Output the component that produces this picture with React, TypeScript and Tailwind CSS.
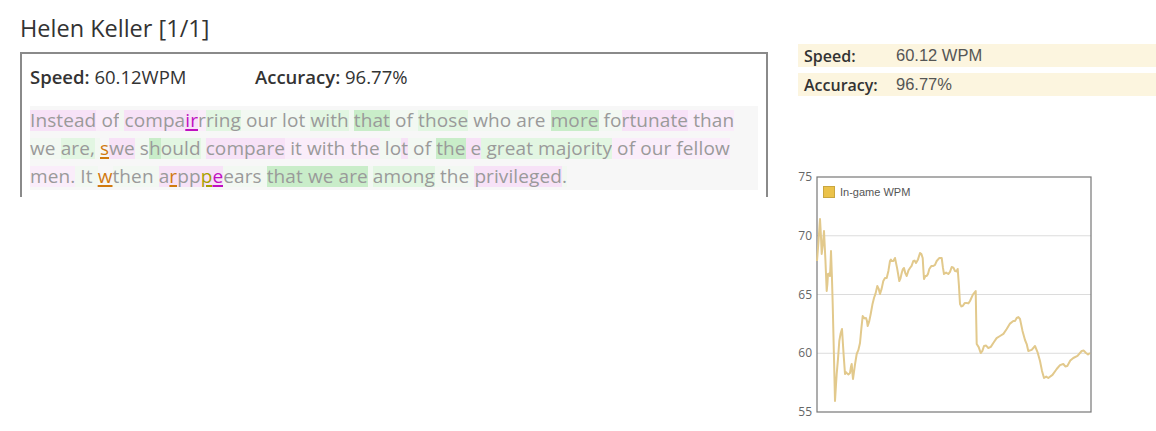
import React from "react";

type Seg = { t: string; bg?: string; err?: string };

const P = "bg-[#f7e2f7]";
const P2 = "bg-[#faedfa]";
const G = "bg-[#e2f6e2]";
const G2 = "bg-[#c9edc9]";
const F = "bg-[#f2f8f2]";

const lines: Seg[][] = [
  [
    { t: "Instead", bg: P },
    { t: " ", bg: P2 },
    { t: "of", bg: P2 },
    { t: " ", bg: F },
    { t: "compa", bg: P },
    { t: "ir", bg: P, err: "text-[#c010c0]" },
    { t: "r", bg: P2 },
    { t: "ring", bg: G },
    { t: " our lot ", bg: F },
    { t: "with", bg: G },
    { t: " ", bg: F },
    { t: "that", bg: G2 },
    { t: " of ", bg: F },
    { t: "those", bg: G },
    { t: " who are ", bg: F },
    { t: "more", bg: G2 },
    { t: " fo", bg: F },
    { t: "rtunate", bg: P },
    { t: " than", bg: P2 },
  ],
  [
    { t: "we ", bg: F },
    { t: "are,", bg: G },
    { t: " ", bg: F },
    { t: "s", err: "text-[#d07a10]" },
    { t: "we", bg: P },
    { t: " s", bg: F },
    { t: "h", bg: G2 },
    { t: "ould", bg: G },
    { t: " ", bg: F },
    { t: "compare", bg: P },
    { t: " it with the", bg: P2 },
    { t: " lo", bg: F },
    { t: "t", bg: P },
    { t: " of ", bg: F },
    { t: "the", bg: G2 },
    { t: " e", bg: P },
    { t: " great majority", bg: G },
    { t: " of our fellow", bg: P2 },
  ],
  [
    { t: "men.", bg: P2 },
    { t: " It ", bg: F },
    { t: "w", err: "text-[#d07a10]" },
    { t: "then ", bg: F },
    { t: "a", bg: P },
    { t: "r", bg: P, err: "text-[#d07a10]" },
    { t: "pp", bg: P },
    { t: "p", bg: P, err: "text-[#a8a000]" },
    { t: "e", bg: P, err: "text-[#c010c0]" },
    { t: "ears ", bg: F },
    { t: "that we are", bg: G2 },
    { t: " ", bg: F },
    { t: "among", bg: G },
    { t: " the ", bg: F },
    { t: "privileged", bg: P },
    { t: ".", bg: F },
  ],
];

const pts: [number, number][] = [
  [817, 260], [820, 218], [821.7, 253], [824, 230], [826.7, 290], [828, 273], [830, 275], [831, 250],
  [832.7, 303], [835, 400], [836.7, 373], [839.3, 340], [842, 328], [845, 373], [846.7, 372], [850, 372],
  [851.7, 363], [853, 378], [856.7, 353], [860, 342], [862.7, 315], [866, 317], [867.7, 325], [870.7, 313],
  [874, 297], [877.3, 285], [880, 293], [883.3, 280], [886.7, 277], [890, 260], [891.7, 260], [895, 257],
  [899.3, 280], [901.7, 272], [904, 267], [906.7, 275], [910, 267], [913.3, 260], [916, 262], [920, 252],
  [922.7, 257], [924, 278], [926.7, 275], [929.3, 268], [933.3, 265], [936.7, 260], [941.7, 257], [944, 273],
  [948.3, 273], [951.7, 266], [955, 270], [957.7, 268], [960, 303], [962.7, 305], [966.7, 302], [970, 300],
  [975.7, 290], [976.7, 343], [980.7, 352], [984, 345], [988.3, 347], [993.3, 342], [1000, 335], [1006.7, 328],
  [1013.3, 320], [1016.7, 317], [1020, 318], [1025, 339], [1028.3, 350], [1035, 345], [1040, 360], [1044, 377],
  [1048.3, 377], [1056.7, 368], [1063.3, 363], [1067.3, 365], [1073.3, 357], [1081.7, 350], [1086, 352], [1090, 352],
];

function linePath() {
  const out: string[] = [];
  for (let i = 0; i < pts.length; i++) {
    const [x, y] = pts[i];
    out.push(`${(x - 790).toFixed(1)},${(y - 168).toFixed(1)}`);
    if (i < pts.length - 1) {
      const [nx, ny] = pts[i + 1];
      const mx = (x + nx) / 2;
      const my = (y + ny) / 2 + (i % 2 === 0 ? 1.4 : -1.4);
      out.push(`${(mx - 790).toFixed(1)},${(my - 168).toFixed(1)}`);
    }
  }
  return "M" + out.join(" L");
}

function Chart() {
  const L = 27;
  const T = 8;
  const W = 274;
  const H = 235;
  const ticks = [75, 70, 65, 60, 55];
  return (
    <svg width={310} height={256} className="block">
      {ticks.map((v, i) => {
        const y = T + (i * H) / 4;
        return (
          <g key={v}>
            {i > 0 && i < 4 && <line x1={L} x2={L + W} y1={y} y2={y} stroke="#dcdcdc" strokeWidth={1} />}
            <text
              x={L - 5}
              y={y + 4}
              textAnchor="end"
              fontSize={12}
              fill="#666"
              fontFamily="'Open Sans', sans-serif"
            >
              {v}
            </text>
          </g>
        );
      })}
      <rect x={L} y={T} width={W} height={H} fill="none" stroke="#777" strokeWidth={1.2} />
      <path d={linePath()} fill="none" stroke="#e2c98c" strokeWidth={2} strokeLinejoin="round" />
      <rect x={33.5} y={17.5} width={11} height={11} fill="#ebc24a" stroke="#c9a640" strokeWidth={1} />
      <text x={50} y={27} fontSize={11} fill="#555" fontFamily="'Liberation Sans', sans-serif">
        In-game WPM
      </text>
    </svg>
  );
}

export default function App() {
  return (
    <div className="w-[1156px] h-[431px] bg-white flex font-['Open_Sans',sans-serif] overflow-hidden">
      <div className="ml-[20px] w-[748px] flex flex-col">
        <div className="mt-[14px] h-[28px] leading-[28px] text-[23.5px] text-[#333]">Helen Keller [1/1]</div>
        <div className="mt-[10px] h-[145px] border-t-2 border-l-2 border-r-2 border-[#8a8a8a] px-[8px]">
          <div className="h-[48px] pb-[2px] flex items-center text-[18.5px] text-[#333]">
            <div className="w-[225px]">
              <span className="font-semibold">Speed:</span> 60.12WPM
            </div>
            <div>
              <span className="font-semibold">Accuracy:</span> 96.77%
            </div>
          </div>
          <div className="mt-[4px] bg-[#f7f7f7] text-[19px] tracking-[0.1px] text-[#9a9a9a]">
            {lines.map((ln, i) => (
              <div key={i} className="h-[28px] flex items-center whitespace-pre">
                {ln.map((s, j) => (
                  <span
                    key={j}
                    className={`leading-[21px] ${s.bg ?? ""} ${s.err ? s.err + " underline decoration-2 underline-offset-2" : ""}`}
                  >
                    {s.t}
                  </span>
                ))}
              </div>
            ))}
          </div>
        </div>
      </div>
      <div className="ml-[30px] flex-1 flex flex-col">
        <div className="mt-[44px] flex flex-col gap-[6px] text-[16px]">
          <div className="h-[23px] bg-[#fcf5df] flex items-center">
            <div className="w-[98px] pl-[6px] font-semibold text-[#333]">Speed:</div>
            <div className="text-[#555] text-[16.5px] font-['Liberation_Sans',sans-serif]">60.12 WPM</div>
          </div>
          <div className="h-[23px] bg-[#fcf5df] flex items-center">
            <div className="w-[98px] pl-[6px] font-semibold text-[#333]">Accuracy:</div>
            <div className="text-[#555] text-[16.5px] font-['Liberation_Sans',sans-serif]">96.77%</div>
          </div>
        </div>
        <div className="mt-[73px] -ml-[8px]">
          <Chart />
        </div>
      </div>
    </div>
  );
}
